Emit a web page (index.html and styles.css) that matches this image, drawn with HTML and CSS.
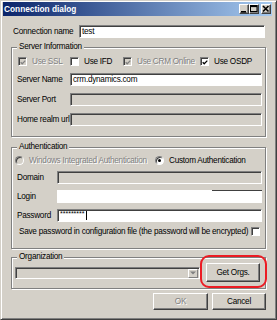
FILE: index.html
```html
<!DOCTYPE html>
<html>
<head>
<meta charset="utf-8">
<link rel="stylesheet" href="styles.css">
</head>
<body>
<div class="window">
  <div class="titlebar">
    <span class="title">Connection dialog</span>
    <div class="ctrls">
      <span class="cbtn"><svg width="8" height="8" viewBox="0 0 8 8"><rect x="1" y="6" width="5" height="1.6" fill="#000"/></svg></span>
      <span class="cbtn"><svg width="8" height="8" viewBox="0 0 8 8"><rect x="0.5" y="0.5" width="6.5" height="6" fill="none" stroke="#000" stroke-width="1"/><rect x="0.5" y="0.5" width="6.5" height="1.6" fill="#000"/></svg></span>
      <span class="cbtn gap"><svg width="8" height="8" viewBox="0 0 8 8"><path d="M1 1 L6.5 6.5 M6.5 1 L1 6.5" stroke="#000" stroke-width="1.6"/></svg></span>
    </div>
  </div>
  <div class="client">
    <div class="connrow">
      <span class="lbl conn-lbl">Connection name</span>
      <div class="field conn-field">test</div>
    </div>

    <fieldset class="group">
      <legend>Server Information</legend>
      <div class="checks">
        <div class="citem w1"><span class="chk dischk"><svg width="7" height="7" viewBox="0 0 7 7"><path d="M0.8 3.2 L2.6 5 L6.2 1.4" fill="none" stroke="#808080" stroke-width="1.4"/></svg></span><span class="dis">Use SSL</span></div>
        <div class="citem w2"><span class="chk"></span><span>Use IFD</span></div>
        <div class="citem w3"><span class="chk dischk"><svg width="7" height="7" viewBox="0 0 7 7"><path d="M0.8 3.2 L2.6 5 L6.2 1.4" fill="none" stroke="#808080" stroke-width="1.4"/></svg></span><span class="dis">Use CRM Online</span></div>
        <div class="citem"><span class="chk"><svg width="7" height="7" viewBox="0 0 7 7"><path d="M0.8 3.2 L2.6 5 L6.2 1.4" fill="none" stroke="#000" stroke-width="1.4"/></svg></span><span>Use OSDP</span></div>
      </div>
      <div class="frow"><span class="lbl srv-lbl">Server Name</span><div class="field srv-field">crm.dynamics.com</div></div>
      <div class="frow"><span class="lbl srv-lbl">Server Port</span><div class="field srv-field disf"></div></div>
      <div class="frow"><span class="lbl srv-lbl">Home realm url</span><div class="field srv-field disf"></div></div>
    </fieldset>

    <fieldset class="group auth">
      <legend>Authentication</legend>
      <div class="radios">
        <div class="ritem r1"><span class="radio disr"></span><span class="dis">Windows Integrated Authentication</span></div>
        <div class="ritem"><span class="radio"><span class="dot"></span></span><span>Custom Authentication</span></div>
      </div>
      <div class="frow"><span class="lbl auth-lbl">Domain</span><div class="field auth-field disf"></div></div>
      <div class="frow"><span class="lbl auth-lbl">Login</span><div class="field auth-field login"></div></div>
      <div class="frow"><span class="lbl auth-lbl">Password</span><div class="field auth-field pwd"><span class="stars">*********</span><span class="caret"></span></div></div>
      <div class="saverow"><span>Save password in configuration file (the password will be encrypted)</span><span class="chk"></span></div>
    </fieldset>

    <fieldset class="group org">
      <legend>Organization</legend>
      <div class="orgrow">
        <div class="combo"><span class="drop"><svg width="6" height="4" viewBox="0 0 6 4"><path d="M0 0.5 L6 0.5 L3 3.5 Z" fill="#808080"/></svg></span></div>
        <div class="btn getorgs">Get Orgs.</div>
      </div>
    </fieldset>

    <div class="btnrow">
      <div class="btn okbtn"><span class="dis">OK</span></div>
      <div class="btn cancel">Cancel</div>
    </div>
  </div>
</div>
<div class="annot"></div>
</body>
</html>
```
FILE: styles.css
```css
* { box-sizing: border-box; }
html, body { margin: 0; padding: 0; }
body {
  position: relative;
  width: 277px;
  height: 320px;
  overflow: hidden;
  background: #d4d0c8;
  font-family: "Liberation Sans", Arial, sans-serif;
  font-size: 8.2px;
  letter-spacing: -0.25px;
  color: #000;
}
.window {
  width: 277px;
  height: 320px;
  border: 1px solid;
  border-color: #d4d0c8 #404040 #404040 #d4d0c8;
  box-shadow: inset 1px 1px #fff, inset -1px -1px #808080;
  padding: 1px 4px 2px 2px;
  display: flex;
  flex-direction: column;
  background: #d4d0c8;
}
.titlebar {
  height: 14px;
  flex: none;
  background: linear-gradient(to right, #0a246a, #a6caf0);
  display: flex;
  align-items: center;
  justify-content: space-between;
  padding: 0 1px 0 1px;
}
.title {
  font-family: "Liberation Sans", Arial, sans-serif;
  font-weight: bold;
  font-size: 8.3px;
  letter-spacing: 0;
  color: #fff;
  line-height: 10px;
}
.ctrls { display: flex; }
.cbtn {
  width: 10px;
  height: 10px;
  background: #d4d0c8;
  border: 1px solid;
  border-color: #fff #404040 #404040 #fff;
  box-shadow: inset -1px -1px #808080;
  display: flex;
  align-items: center;
  justify-content: center;
}
.cbtn.gap { margin-left: 2px; }
.client { display: flex; flex-direction: column; flex: 1; }
.lbl { line-height: 10px; white-space: nowrap; }
.dis { color: #808080; text-shadow: 1px 1px 0 #fff; }

.field {
  height: 13px;
  border: 1px solid;
  border-color: #808080 #fff #fff #808080;
  box-shadow: inset 1px 1px #404040;
  background: #fff;
  padding-left: 2px;
  line-height: 11px;
  white-space: nowrap;
  overflow: hidden;
}
.field.disf { background: #d4d0c8; }

.connrow { display: flex; align-items: center; margin-top: 9px; padding-left: 10px; }
.conn-lbl { width: 66px; }
.conn-field { width: 186px; }

.group {
  margin: 4px 0 0 8px;
  width: 255px;
  border: 1px solid #808080;
  box-shadow: 1px 1px 0 #fff, inset 1px 1px 0 #fff;
  padding: 0 3px 10px 3px;
  min-width: 0;
}
.group legend {
  margin-left: 2px;
  padding: 0 2px;
  line-height: 10px;
  background: #d4d0c8;
}
.checks { display: flex; align-items: center; padding-top: 5px; height: 14px; }
.citem { display: flex; align-items: center; white-space: nowrap; }
.w1 { width: 52px; margin-left: 3px; }
.w2 { width: 53px; }
.w3 { width: 77px; }
.chk {
  width: 9px;
  height: 9px;
  flex: none;
  border: 1px solid;
  border-color: #808080 #fff #fff #808080;
  box-shadow: inset 1px 1px #404040;
  background: #fff;
  margin-right: 5px;
  display: flex;
  align-items: center;
  justify-content: center;
  padding: 1px 0 0 1px;
}
.chk.dischk { background: #d4d0c8; }

.frow { display: flex; align-items: center; margin-top: 7px; padding-left: 2px; }
.srv-lbl { width: 53px; }
.srv-field { width: 192px; }

.group.auth { margin-top: 5px; padding-bottom: 12px; }
.radios { display: flex; align-items: center; padding-top: 4px; height: 13px; }
.ritem { display: flex; align-items: center; white-space: nowrap; }
.r1 { width: 140px; }
.radio {
  width: 9px;
  height: 9px;
  flex: none;
  border-radius: 50%;
  border: 1px solid;
  border-color: #808080 #fff #fff #808080;
  box-shadow: inset 1px 1px #404040;
  background: #fff;
  margin-right: 5px;
  display: flex;
  align-items: center;
  justify-content: center;
}
.radio.disr { background: #d4d0c8; }
.dot { width: 3px; height: 3px; border-radius: 50%; background: #000; }
.auth .frow { margin-top: 6px; }
.auth .frow:first-of-type { margin-top: 7px; }
.auth-lbl { width: 40px; }
.auth-field { width: 205px; }
.field.login {
  border: none;
  box-shadow: none;
  background: #fff linear-gradient(#404040, #404040) no-repeat right 0 top 0 / 50px 1px;
}
.pwd { display: flex; align-items: flex-start; }
.stars { font-size: 7px; line-height: 7px; letter-spacing: 0; }
.caret { width: 1px; height: 9px; background: #000; margin-left: 1px; margin-top: 1px; }
.saverow {
  display: flex;
  align-items: center;
  justify-content: space-between;
  margin-top: 5px;
  padding-left: 4px;
  height: 9px;
  white-space: nowrap;
}
.saverow .chk { margin-right: 2px; }

.group.org { margin-top: 3px; padding-bottom: 6px; }
.orgrow { display: flex; align-items: center; padding-top: 1px; }
.combo {
  width: 185px;
  height: 12px;
  border: 1px solid;
  border-color: #808080 #fff #fff #808080;
  box-shadow: inset 1px 1px #404040;
  background: #d4d0c8;
  display: flex;
  justify-content: flex-end;
  padding: 1px 1px 0 0;
}
.drop {
  width: 10px;
  height: 9px;
  border: 1px solid;
  border-color: #fff #808080 #808080 #fff;
  background: #d4d0c8;
  display: flex;
  align-items: center;
  justify-content: center;
}
.btn {
  height: 19px;
  background: #d4d0c8;
  border: 1px solid;
  border-color: #fff #404040 #404040 #fff;
  box-shadow: inset -1px -1px #808080;
  display: flex;
  align-items: center;
  justify-content: center;
  white-space: nowrap;
}
.getorgs { width: 54px; margin-left: 6px; }
.btnrow { display: flex; justify-content: flex-end; gap: 4px; margin-top: 4px; padding-right: 6px; }
.btnrow .btn { height: 17px; }
.okbtn { width: 55px; }
.cancel { width: 54px; }

.annot {
  position: absolute;
  left: 200px;
  top: 255px;
  width: 67px;
  height: 33px;
  border: 2px solid #ec1c24;
  border-radius: 9px;
}
```
